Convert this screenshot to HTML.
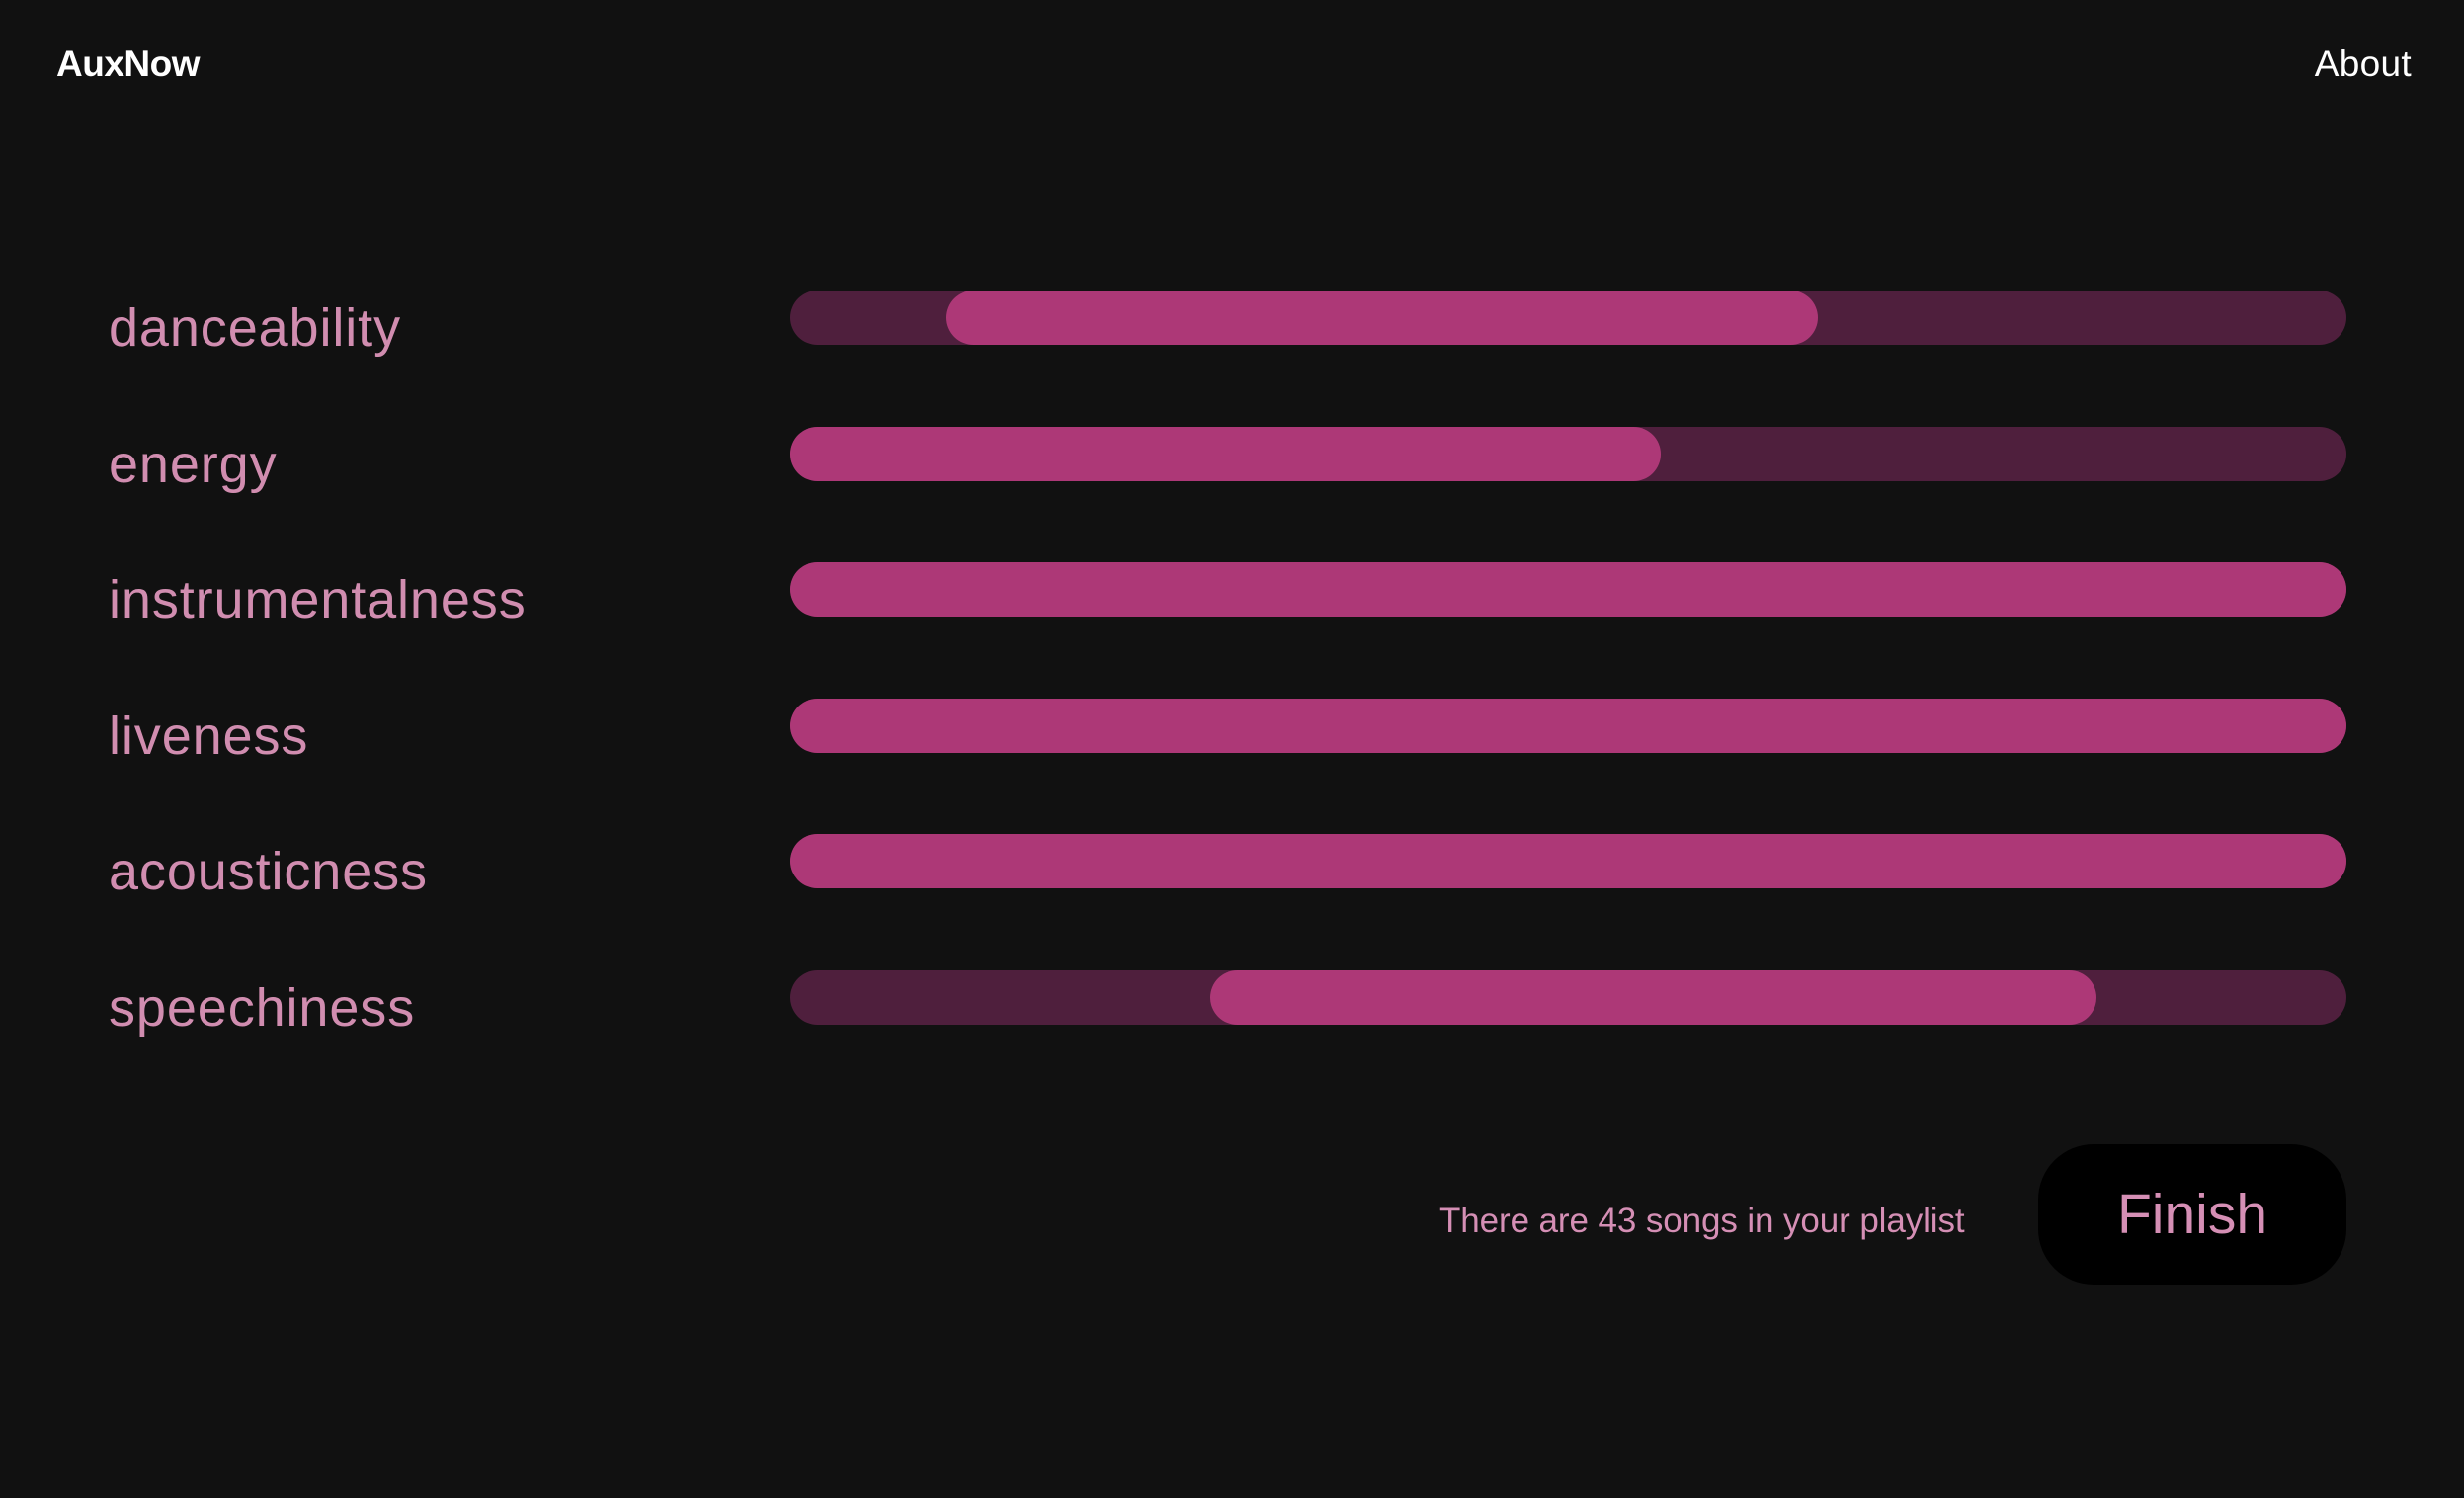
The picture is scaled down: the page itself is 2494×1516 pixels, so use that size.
<!DOCTYPE html>
<html><head><style>
html,body{margin:0;padding:0;width:2494px;height:1516px;background:#111111;overflow:hidden;font-family:"Liberation Sans",sans-serif}
.logo{position:absolute;left:57px;top:44px;font-size:37px;font-weight:bold;color:#fff;letter-spacing:-0.5px}
.about{position:absolute;right:53px;top:44px;font-size:37px;color:#fff;letter-spacing:0.3px}
.lab{position:absolute;left:110px;font-size:54px;color:#d18db0;line-height:1;letter-spacing:0.9px}
.track{position:absolute;left:800px;width:1575px;height:55px;border-radius:28px;background:#4f1f3d}
.fill{position:absolute;top:0;height:55px;border-radius:28px;background:#ad3877}
.msg{position:absolute;left:1457px;top:1216px;font-size:35px;color:#d58fb5;letter-spacing:-0.1px}
.btn{position:absolute;left:2063px;top:1158px;width:312px;height:142px;border-radius:56px;background:#000;color:#d58fb5;font-size:57px;display:flex;align-items:center;justify-content:center}
</style></head><body>
<div class="logo">AuxNow</div>
<div class="about">About</div>

<div class="lab" style="top:305px">danceability</div>
<div class="track" style="top:294px"><div class="fill" style="left:158px;width:882px"></div></div>

<div class="lab" style="top:443px">energy</div>
<div class="track" style="top:432px"><div class="fill" style="left:0;width:881px"></div></div>

<div class="lab" style="top:580px">instrumentalness</div>
<div class="track" style="top:569px"><div class="fill" style="left:0;width:1575px"></div></div>

<div class="lab" style="top:718px">liveness</div>
<div class="track" style="top:707px"><div class="fill" style="left:0;width:1575px"></div></div>

<div class="lab" style="top:855px">acousticness</div>
<div class="track" style="top:844px"><div class="fill" style="left:0;width:1575px"></div></div>

<div class="lab" style="top:993px">speechiness</div>
<div class="track" style="top:982px"><div class="fill" style="left:425px;width:897px"></div></div>

<div class="msg">There are 43 songs in your playlist</div>
<div class="btn">Finish</div>
</body></html>
